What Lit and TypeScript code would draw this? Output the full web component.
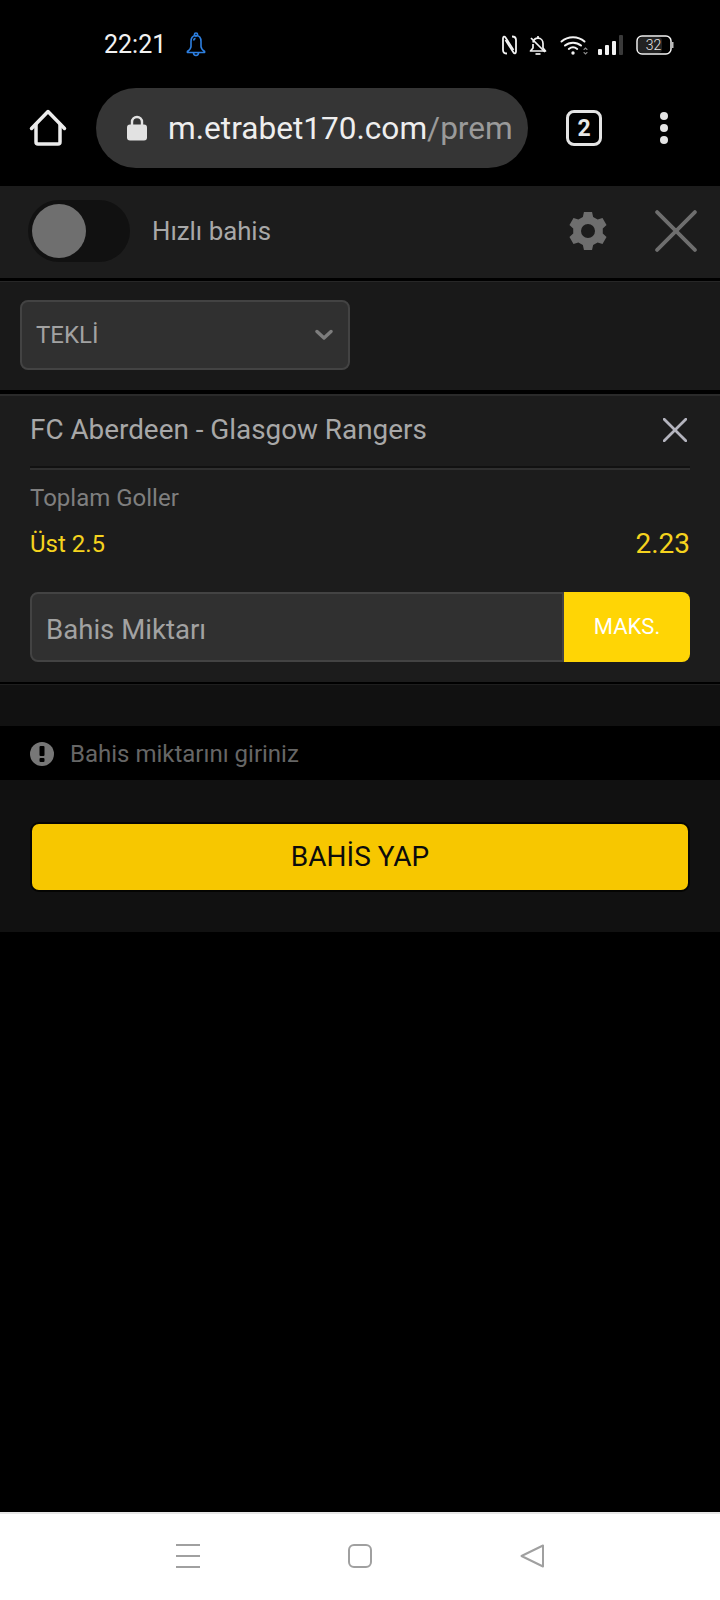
import { LitElement, html, css } from "lit";
import { customElement } from "lit/decorators.js";

function gearPath(cx: number, cy: number, ro: number, ri: number, hole: number) {
  const p = (r: number, deg: number) => {
    const a = (deg * Math.PI) / 180;
    return `${(cx + r * Math.cos(a)).toFixed(2)} ${(cy + r * Math.sin(a)).toFixed(2)}`;
  };
  const pts: string[] = [];
  for (let i = 0; i < 6; i++) {
    const c = -90 + i * 60;
    pts.push(p(ri, c - 20), p(ro, c - 12), p(ro, c + 12), p(ri, c + 20));
  }
  const outer = "M" + pts.join("L") + "Z";
  const inner = `M${cx - hole} ${cy}a${hole} ${hole} 0 1 0 ${2 * hole} 0a${hole} ${hole} 0 1 0 ${-2 * hole} 0Z`;
  return outer + inner;
}

@customElement("app-root")
export class AppRoot extends LitElement {
  static styles = css`
    :host { display: block; width: 720px; height: 1600px; background: #000; font-family: Roboto, "Liberation Sans", sans-serif; overflow: hidden; }
    .page { display: flex; flex-direction: column; height: 1600px; }
    svg { display: block; flex: none; }

    .status { height: 86px; display: flex; align-items: flex-start; padding: 28px 46px 0 104px; box-sizing: border-box; color: #f2f2f2; }
    .time { font-size: 25px; line-height: 34px; width: 82px; }
    .bell { margin-top: 4px; }
    .status-right { margin-left: auto; display: flex; align-items: center; height: 34px; }
    .off { margin-left: 12px; }
    .wifi { margin-left: 13px; }
    .signal { margin-left: 10px; }
    .batt { position: relative; width: 38px; height: 20px; margin-left: 12px; }
    .batt span { position: absolute; left: 0; width: 35px; top: 0; text-align: center; font-size: 14px; font-weight: 300; line-height: 20px; color: #e8e8e8; }

    .browser { height: 100px; display: flex; align-items: flex-start; padding-top: 2px; box-sizing: border-box; }
    .home { width: 96px; height: 80px; display: flex; align-items: center; justify-content: center; }
    .pill { width: 432px; height: 80px; border-radius: 40px; background: #353535; display: flex; align-items: center; padding-left: 31px; box-sizing: border-box; }
    .url { margin-left: 21px; white-space: nowrap; font-size: 31.6px; color: #eeeeee; }
    .url i { font-style: normal; color: #9a9a9a; }
    .tabs { margin: 22px 0 0 38px; width: 36px; height: 36px; box-sizing: border-box; border: 3.5px solid #e4e4e4; border-radius: 8px; color: #e8e8e8; font-size: 23px; font-weight: 700; display: flex; align-items: center; justify-content: center; }
    .more { margin: 24px 0 0 58px; display: flex; flex-direction: column; gap: 4px; }
    .more b { width: 8px; height: 8px; border-radius: 50%; background: #e4e4e4; display: block; }

    .top { height: 92px; background: #1c1c1c; display: flex; align-items: center; box-sizing: border-box; }
    .toggle { margin: 0 0 2px 28px; width: 102px; height: 62px; border-radius: 31px; background: #111; display: flex; align-items: center; padding-left: 4px; box-sizing: border-box; }
    .knob { width: 54px; height: 54px; border-radius: 50%; background: #6f6f6f; }
    .top-label { margin: 0 0 2px 22px; font-size: 25.8px; color: #a8a8a8; }
    .gear { margin: 0 0 2px auto; }
    .close-big { margin: 0 23px 2px 47px; }

    .rule { height: 3px; background: #000; border-bottom: 1px solid #272727; }
    .select-sec { height: 108px; background: #191919; padding-top: 18px; box-sizing: border-box; padding-left: 20px; }
    .select { width: 330px; height: 70px; background: #303030; border: 2px solid #434343; border-radius: 8px; box-sizing: border-box; display: flex; align-items: center; padding: 0 15px 0 14px; font-size: 24px; color: #a2a2a2; justify-content: space-between; }

    .rule2 { height: 4px; background: #000; border-bottom: 2px solid #2a2a2a; }
    .card { height: 286px; background: #1c1c1c; padding: 0 30px; box-sizing: border-box; display: flex; flex-direction: column; }
    .match { height: 70px; display: flex; align-items: center; justify-content: space-between; font-size: 27.85px; color: #a8a8a8; padding-bottom: 4px; box-sizing: border-box; }
    .match-x { margin: 2px 3px 0 0; }
    .sep { height: 2px; background: #111; border-bottom: 2px solid #2f2f2f; }
    .market { margin-top: 13px; font-size: 24px; line-height: 30px; color: #7f7f7f; }
    .pick { margin-top: 16px; display: flex; justify-content: space-between; align-items: flex-start; color: #f5d31e; font-size: 24px; line-height: 30px; height: 32px; }
    .pick .odd { font-size: 28px; line-height: 30px; }
    .stake { margin-top: 31px; display: flex; height: 70px; }
    .input { flex: 1; background: #303030; border: 2px solid #434343; border-radius: 8px 0 0 8px; box-sizing: border-box; display: flex; align-items: center; padding: 4px 0 0 14px; font-size: 27.6px; color: #a2a2a2; }
    .max { width: 126px; background: #ffd505; border-radius: 0 8px 8px 0; display: flex; align-items: center; justify-content: center; color: #fff; font-size: 22px; padding-bottom: 2px; box-sizing: border-box; }

    .rule3 { height: 2px; background: #000; }
    .gap { height: 42px; background: #111; border-top: 1px solid #1e1e1e; box-sizing: border-box; }
    .note { height: 54px; background: #000; display: flex; align-items: center; padding: 1px 0 0 30px; box-sizing: border-box; font-size: 24px; color: #666; }
    .note svg { margin-right: 16px; }
    .action { height: 152px; background: #111; padding: 42px 30px 0; box-sizing: border-box; }
    .bet { height: 70px; box-sizing: border-box; border: 2px solid #050503; border-radius: 9px; background: #f7c700; display: flex; align-items: center; justify-content: center; color: #0c0c0c; font-size: 28px; padding-bottom: 2px; }

    .spacer { flex: 1; }
    .nav { height: 88px; background: #fff; border-top: 2px solid #e6e6e6; box-sizing: border-box; display: flex; align-items: flex-start; padding: 30px 0 0 176px; gap: 148px; }
  `;

  private x(size: number, color: string, sw: number) {
    return html`<svg width=${size} height=${size} viewBox="0 0 40 40"><path d="M2 2 38 38M38 2 2 38" stroke=${color} stroke-width=${sw} stroke-linecap="round" fill="none"/></svg>`;
  }

  render() {
    return html`
      <div class="page">
        <div class="status">
          <div class="time">22:21</div>
          <svg class="bell" width="20" height="26" viewBox="0 0 20 26" fill="none" stroke="#2d7fe0" stroke-width="1.6" stroke-linejoin="round">
            <path d="M10 3.500c-3.600 0-5 2.800-5 6v5c0 2-1.200 3.200-3.600 5v1h17.200v-1c-2.400-1.800-3.600-3-3.600-5v-5c0-3.200-1.400-6-5-6Z"/>
            <circle cx="10" cy="2.600" r="1.600"/><path d="M7.500 20.500c0 4 5 4 5 0"/><path d="M7.500 8.500c.3-1.200.9-1.900 2-2.300"/>
          </svg>
          <div class="status-right">
            <svg width="15" height="20" viewBox="0 0 15 20" fill="none" stroke="#f2f2f2" stroke-width="1.800">
              <path d="M5 18.500C2.500 18.500 1 17.500 1 15V3.500C1 1.500 2.500 1 3.500 2.500L11.500 15"/><path d="M10 1.500C12.500 1.500 14 2.500 14 5V16.500C14 18.500 12.500 19 11.500 17.500L3.500 5"/>
            </svg>
            <svg class="off" width="18" height="21" viewBox="0 0 18 21" fill="none" stroke="#f2f2f2" stroke-width="1.700" stroke-linejoin="round">
              <path d="M4 7.500C4.500 4.800 6.500 3.200 9 3.200c3 0 5 2.300 5 5.300v4.500l2.500 3h-15l2.500-3V9"/><path d="M6.500 19h5"/><path d="M9 1v2"/><path d="M2 3l14 14"/>
            </svg>
            <svg class="wifi" width="28" height="20" viewBox="0 0 28 20" fill="none" stroke="#f2f2f2" stroke-width="2" stroke-linecap="round">
              <path d="M1.500 6.500C8 .8 18 .8 24.500 6.500"/><path d="M5 10.500c4.500-3.800 11.500-3.800 16 0"/><path d="M8.800 14c2.500-2 5.900-2 8.400 0"/>
              <circle cx="13" cy="18" r="1.700" fill="#f2f2f2" stroke="none"/><path d="M24 14.500l1.500-1.500 1.500 1.500M24 17.500l1.500 1.500 1.500-1.500" stroke="#8a8a8a" stroke-width="1.100"/>
            </svg>
            <svg class="signal" width="26" height="20" viewBox="0 0 26 20">
              <rect x="0" y="14" width="4" height="6" rx="1" fill="#f2f2f2"/><rect x="7" y="10" width="4" height="10" rx="1" fill="#f2f2f2"/><rect x="14" y="6" width="4" height="14" rx="1" fill="#f2f2f2"/><rect x="21" y="0" width="4" height="20" rx="1" fill="#3a3a3a"/>
            </svg>
            <div class="batt">
              <svg width="38" height="20" viewBox="0 0 38 20" fill="none"><rect x="1" y="1" width="34" height="18" rx="5" stroke="#f2f2f2" stroke-width="1.500"/><rect x="2" y="2" width="24" height="16" rx="4" fill="#222"/><path d="M36.500 7v6" stroke="#bdbdbd" stroke-width="2"/></svg>
              <span>32</span>
            </div>
          </div>
        </div>

        <div class="browser">
          <div class="home">
            <svg width="38" height="38" viewBox="0 0 38 38" fill="none" stroke="#ececec" stroke-width="3.500" stroke-linejoin="round" stroke-linecap="round">
              <path d="M2.500 19.500 19 2.500l16.500 17"/><path d="M7 15.500V33c0 1.500.8 2 2 2h20c1.200 0 2-.5 2-2V15.500"/>
            </svg>
          </div>
          <div class="pill">
            <svg width="20" height="26" viewBox="0 0 20 26"><path d="M5 11V7a5 5 0 0 1 10 0v4" fill="none" stroke="#e2e2e2" stroke-width="2.400"/><rect x="0" y="9.500" width="20" height="16" rx="3" fill="#e2e2e2"/></svg>
            <div class="url">m.etrabet170.com<i>/prem</i></div>
          </div>
          <div class="tabs">2</div>
          <div class="more"><b></b><b></b><b></b></div>
        </div>

        <div class="top">
          <div class="toggle"><div class="knob"></div></div>
          <div class="top-label">Hızlı bahis</div>
          <svg class="gear" width="40" height="40" viewBox="0 0 40 40" fill="#6e6e6e"><path fill-rule="evenodd" d=${gearPath(20, 20, 19.5, 15, 7)}/></svg>
          <div class="close-big">${this.x(42, "#6e6e6e", 3.6)}</div>
        </div>
        <div class="rule"></div>

        <div class="select-sec">
          <div class="select"><span>TEKLİ</span>
            <svg width="18" height="12" viewBox="0 0 18 12" fill="none" stroke="#7d7d7d" stroke-width="3.400" stroke-linecap="round" stroke-linejoin="round"><path d="M2 2.500 9 9l7-6.500"/></svg>
          </div>
        </div>
        <div class="rule2"></div>

        <div class="card">
          <div class="match"><span>FC Aberdeen - Glasgow Rangers</span>
            <span class="match-x">${this.x(24, "#b4b4be", 4.6)}</span></div>
          <div class="sep"></div>
          <div class="market">Toplam Goller</div>
          <div class="pick"><span>Üst 2.5</span><span class="odd">2.23</span></div>
          <div class="stake">
            <div class="input">Bahis Miktarı</div>
            <div class="max">MAKS.</div>
          </div>
        </div>
        <div class="rule3"></div>
        <div class="gap"></div>

        <div class="note">
          <svg width="24" height="24" viewBox="0 0 24 24"><circle cx="12" cy="12" r="12" fill="#777"/><rect x="9.500" y="4" width="5" height="10" rx="1" fill="#000"/><rect x="9.500" y="16" width="5" height="4" rx="1" fill="#000"/></svg>
          Bahis miktarını giriniz
        </div>
        <div class="action"><div class="bet">BAHİS YAP</div></div>

        <div class="spacer"></div>
        <div class="nav">
          <svg width="24" height="24" viewBox="0 0 24 24" stroke="#a0a0a0" stroke-width="2"><path d="M0 1h24M0 12h24M0 23h24"/></svg>
          <svg width="24" height="24" viewBox="0 0 24 24" fill="none" stroke="#a0a0a0" stroke-width="2"><rect x="1" y="1" width="22" height="22" rx="5"/></svg>
          <svg width="24" height="24" viewBox="0 0 24 24" fill="none" stroke="#a0a0a0" stroke-width="2" stroke-linejoin="round"><path d="M23 1.500v21L1.500 12Z"/></svg>
        </div>
      </div>
    `;
  }
}
